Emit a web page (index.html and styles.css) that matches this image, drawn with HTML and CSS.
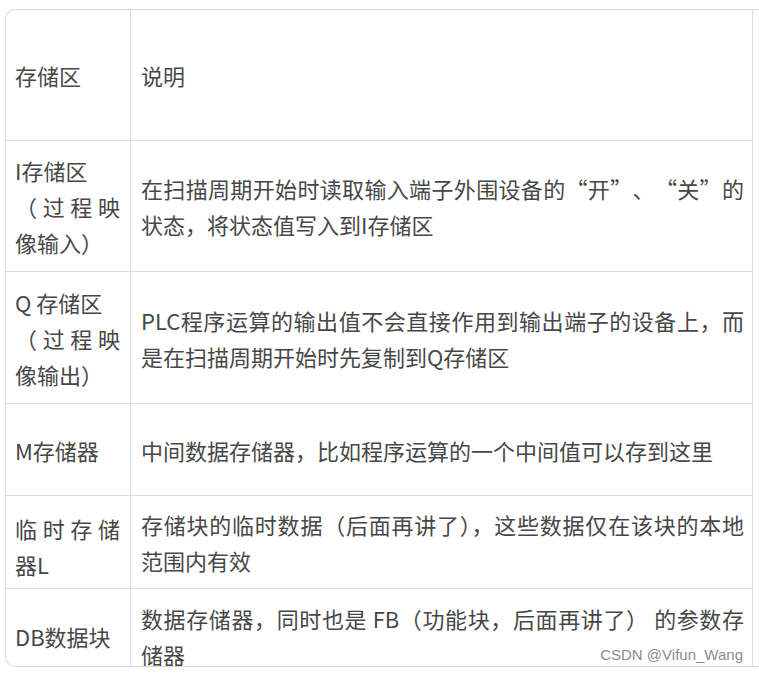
FILE: index.html
```html
<!DOCTYPE html>
<html lang="zh-CN">

<head>
    <meta charset="UTF-8" />
    <meta name="viewport" content="width=device-width, initial-scale=1.0" />
    <title>存储区说明</title>
    <link rel="stylesheet" href="styles.css">
</head>

<body>
    <div class="frame">
        <table class="areas">
            <tr class="row-head">
                <td class="name">存储区</td>
                <td class="desc">说明</td>
            </tr>
            <tr class="row-tall">
                <td class="name">I存储区<br>（过程映像输入）</td>
                <td class="desc">在扫描周期开始时读取输入端子外围设备的<span class="ql">“</span>开<span class="qr">”</span>、<span class="ql">“</span>关<span class="qr">”</span>的状态，将状态值写入到I存储区</td>
            </tr>
            <tr class="row-tall row-q">
                <td class="name">Q 存储区<br>（过程映像输出）</td>
                <td class="desc">PLC程序运算的输出值不会直接作用到输出端子的设备上，而是在扫描周期开始时先复制到Q存储区</td>
            </tr>
            <tr class="row-short">
                <td class="name">M存储器</td>
                <td class="desc">中间数据存储器，比如程序运算的一个中间值可以存到这里</td>
            </tr>
            <tr class="row-short row-l">
                <td class="name">临时存储器L</td>
                <td class="desc">存储块的临时数据（后面再讲了），这些数据仅在该块的本地范围内有效</td>
            </tr>
            <tr class="row-short row-db">
                <td class="name">DB数据块</td>
                <td class="desc">数据存储器，同时也是 FB（功能块，后面再讲了） 的参数存储器</td>
            </tr>
        </table>
    </div>

    <div class="watermark">CSDN @Vifun_Wang</div>
</body>

</html>
```

FILE: styles.css
```css
html,
body {
    margin: 0;
    padding: 0;
    background: white;
    overflow: hidden;
}

body {
    position: relative;
    width: 759px;
    height: 674px;
    font-family: "Noto Sans CJK SC", "Noto Sans", sans-serif;
    color: #474747;
}

/* the card runs on past the right edge, so only three sides show */
.frame {
    margin: 9px 0 0 5px;
    width: 753px;
    height: 656px;
    border: 1px solid #dcdcdc;
    border-right: none;
    border-radius: 10px 0 0 10px;
    overflow: hidden;
}

.areas {
    border-collapse: separate;
    border-spacing: 0;
    table-layout: fixed;
    width: 747px;
    font-size: 22px;
    line-height: 36px;
}

.areas td {
    box-sizing: border-box;
    border-right: 1px solid #dcdcdc;
    border-bottom: 1px solid #dcdcdc;
    vertical-align: middle;
    text-align: justify;
    padding: 0 10px 0 9px;
}

.areas td.name {
    width: 125px;
}

.areas td.desc {
    padding: 0 8px 0 10px;
}

/* full-width curly quotes, as in a Chinese font */
.ql,
.qr {
    display: inline-block;
    width: 1em;
}

.ql {
    text-align: right;
}

.qr {
    text-align: left;
}

.row-head td {
    height: 131px;
}

.row-tall td {
    height: 131px;
}

.row-q td {
    height: 132px;
}

.row-short td {
    height: 92px;
}

.row-l td {
    height: 93px;
    padding-top: 8px;
}

.row-db td {
    height: 94px;
}

.watermark {
    position: absolute;
    right: 16px;
    bottom: 10px;
    font-family: "Liberation Sans", Arial, sans-serif;
    font-size: 15px;
    line-height: 18px;
    color: #8c8c8c;
}
```
